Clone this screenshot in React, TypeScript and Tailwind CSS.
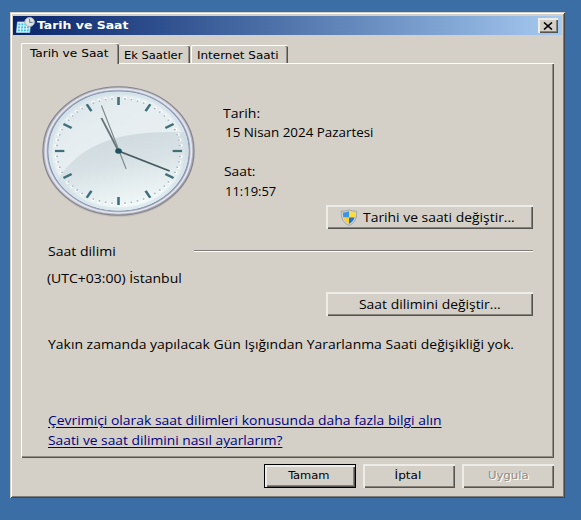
import type { ReactNode } from "react";
import clsx from "clsx";

const ui = "font-['Open_Sans','Noto_Sans',sans-serif] text-[12px] leading-[18px] text-black";
const tahoma = "font-['DejaVu_Sans_Condensed','DejaVu_Sans',sans-serif] text-[11px]";

const raised =
  "shadow-[inset_2px_2px_0_#eeece7,inset_-1px_-1px_0_#55534f,inset_-2px_-2px_0_#85827c]";

interface LabelProps {
  children: ReactNode;
  className?: string;
}

function Label({ children, className }: LabelProps) {
  return (
    <span className={clsx("block w-max whitespace-nowrap", className)}>{children}</span>
  );
}

function CalendarIcon() {
  return (
    <svg width="19" height="17" viewBox="0 0 19 17">
      <path d="M1.500 5h13l-.8 10.500H.5z" fill="#e9f7fc" stroke="#a9d3e6" strokeWidth="0.8" />
      {[6.4, 9.4, 12.4].map((y, row) =>
        [2.4, 5.4, 8.4, 11.4].map((x) => (
          <rect key={`${x}-${y}`} x={x - row * 0.3} y={y} width="2" height="2" fill="#35c0e4" />
        ))
      )}
      <ellipse cx="13.600" cy="5" rx="4.800" ry="4.500" fill="#dfe4e7" stroke="#a3adb5" strokeWidth="1" />
      <path d="M13.600 1.800v3.600h3" fill="none" stroke="#55707c" strokeWidth="0.9" />
    </svg>
  );
}

function ShieldIcon() {
  return (
    <svg width="18" height="17" viewBox="0 0 18 17">
      <defs>
        <clipPath id="shield">
          <path d="M9 2C7 3.200 5.200 3.600 3 3.600 2.800 9 4.200 12.400 9 14.900c4.800-2.500 6.200-5.900 6-11.300C12.800 3.600 11 3.200 9 2z" />
        </clipPath>
      </defs>
      <path
        d="M9 .6C6.800 2 4.300 2.200 1.300 2.100.9 9 2.700 13.600 9 16.500c6.300-2.900 8.100-7.500 7.700-14.400C13.700 2.200 11.200 2 9 .6z"
        fill="#cfd2d4"
        stroke="#979b9f"
        strokeWidth="0.8"
      />
      <g clipPath="url(#shield)">
        <rect width="9" height="8.500" fill="#3a95e4" />
        <rect x="9" width="9" height="8.500" fill="#ffdc33" />
        <rect y="8.500" width="9" height="8.500" fill="#ffd02a" />
        <rect x="9" y="8.500" width="9" height="8.500" fill="#2270c8" />
      </g>
    </svg>
  );
}

function Clock() {
  const marks = Array.from({ length: 60 }, (_, i) => i);
  return (
    <svg width="153" height="132" viewBox="0 0 130 132" preserveAspectRatio="none" className="block">
      <defs>
        <linearGradient id="rim" x1="0" y1="0" x2="1" y2="1">
          <stop offset="0" stopColor="#a9adb8" />
          <stop offset="0.5" stopColor="#c4c8d6" />
          <stop offset="1" stopColor="#999dac" />
        </linearGradient>
        <linearGradient id="face" x1="0" y1="0" x2="0.7" y2="1">
          <stop offset="0" stopColor="#d3e1e7" />
          <stop offset="0.35" stopColor="#e6edf0" />
          <stop offset="1" stopColor="#eaf0f1" />
        </linearGradient>
        <linearGradient id="shade" x1="0.3" y1="0" x2="0.7" y2="1">
          <stop offset="0" stopColor="#c8d3d9" />
          <stop offset="0.4" stopColor="#d5e0e4" />
          <stop offset="0.9" stopColor="#f4fbfb" />
        </linearGradient>
        <clipPath id="dial">
          <circle cx="65" cy="65" r="59.500" />
        </clipPath>
      </defs>
      <circle cx="65" cy="66.500" r="64.500" fill="#b5b0a9" opacity="0.6" />
      <circle cx="65" cy="65" r="64.200" fill="url(#rim)" stroke="#85838a" strokeWidth="1" />
      <circle cx="65" cy="65" r="61.900" fill="none" stroke="#e4e7ef" strokeWidth="1.500" />
      <circle cx="65" cy="65" r="60" fill="url(#face)" stroke="#8c95b0" strokeWidth="1" />
      <g clipPath="url(#dial)">
        <path d="M14 92C34 58 66 42 130 47V130H0z" fill="url(#shade)" opacity="0.85" />
        <circle cx="65" cy="65" r="58" fill="none" stroke="#c8dde7" strokeWidth="3" opacity="0.5" />
      </g>
      {marks.map((i) =>
        i % 5 === 0 ? (
          <rect
            key={i}
            x="63.900"
            y="11"
            width="2.200"
            height="8"
            fill="#3f7079"
            transform={`rotate(${i * 6} 65 65)`}
          />
        ) : (
          <g key={i} transform={`rotate(${i * 6} 65 65)`}>
            <circle cx="65" cy="11.800" r="1.500" fill="#fff" />
            <circle cx="65" cy="12.500" r="0.900" fill="#a4bbc2" />
          </g>
        )
      )}
      <path d="M65 65L50.500 32" stroke="#667478" strokeWidth="1.700" />
      <path d="M65 65L108.500 85" stroke="#465b60" strokeWidth="1.600" />
      <path d="M71.500 83L50.500 19.500" stroke="#7a8588" strokeWidth="0.900" />
      <circle cx="65" cy="65" r="2.800" fill="#1d535c" />
    </svg>
  );
}

function TitleBar() {
  return (
    <div className="flex h-[19px] items-center bg-linear-to-r from-[#0a246a] to-[#a6caf0] pr-[4px] pl-[3px]">
      <CalendarIcon />
      <div className={clsx(tahoma, "ml-[2px] flex-1 pt-px font-bold text-white")}>
        <Label className="origin-left scale-x-[1.26]">Tarih ve Saat</Label>
      </div>
      <button className={clsx("flex h-[15px] w-[20px] items-center justify-center bg-[#d4d0c8]", raised)}>
        <svg width="10" height="8" viewBox="0 0 10 8">
          <path d="M1 .5l8 7M9 .5l-8 7" stroke="#000" strokeWidth="1.600" />
        </svg>
      </button>
    </div>
  );
}

function Tabs() {
  const tab =
    "rounded-t-[2px] border-t border-l border-t-white border-l-white shadow-[inset_-1px_0_0_#55534f,inset_-2px_0_0_#908d87]";
  return (
    <div className={clsx(tahoma, "relative z-10 flex h-[20px] items-end text-black")}>
      <div className={clsx(tab, "h-[21px] w-[98px] self-start bg-[#d4d0c8] pt-[2px] pl-[8px]")}>
        <Label className="origin-left scale-x-[1.23]">Tarih ve Saat</Label>
      </div>
      <div className={clsx(tab, "h-[18px] w-[71px] border-l-0 pt-[2px] pl-[5px]")}>
        <Label className="origin-left scale-x-[1.16]">Ek Saatler</Label>
      </div>
      <div className={clsx(tab, "ml-px h-[18px] w-[97px] pt-[2px] pl-[5px]")}>
        <Label className="origin-left scale-x-[1.21]">Internet Saati</Label>
      </div>
    </div>
  );
}

function Panel() {
  return (
    <div
      className={clsx(
        ui,
        "flex h-[395px] flex-col border-t border-l border-white pr-[21px] pl-[26px] shadow-[inset_-1px_-1px_0_#55534f,inset_-2px_-2px_0_#908d87]"
      )}
    >
      <div className="flex h-[178px]">
        <div className="-ml-[6px] w-[182px] pt-[22px]">
          <Clock />
        </div>
        <div className="flex flex-1 flex-col pt-[41px]">
          <Label className="-ml-px origin-left scale-x-[1.17]">Tarih:</Label>
          <Label className="mt-px ml-px origin-left scale-x-[1.115]">15 Nisan 2024 Pazartesi</Label>
          <Label className="mt-[21px] origin-left scale-x-[1.15]">Saat:</Label>
          <Label className="mt-[2px] ml-px origin-left scale-x-[1.08]">11:19:57</Label>
          <button
            className={clsx("mt-[4px] flex h-[24px] w-[207px] shrink-0 items-center self-end pl-[14px]", raised)}
          >
            <ShieldIcon />
            <Label className="ml-[5px] origin-left scale-x-[1.158] pt-px">Tarihi ve saati değiştir...</Label>
          </button>
        </div>
      </div>
      <div className="flex h-[18px] items-center">
        <div className="w-[146px] pt-[2px]">
          <Label className="origin-left scale-x-[1.17]">Saat dilimi</Label>
        </div>
        <div className="h-[2px] flex-1 border-t border-b border-t-[#807d78] border-b-white" />
      </div>
      <Label className="mt-[10px] -ml-px origin-left scale-x-[1.165]">(UTC+03:00) İstanbul</Label>
      <button className={clsx("mt-[4px] flex h-[24px] w-[207px] items-center self-end pl-[33px]", raised)}>
        <Label className="origin-left scale-x-[1.158] pt-px">Saat dilimini değiştir...</Label>
      </button>
      <Label className="mt-[20px] origin-left scale-x-[1.163]">
        Yakın zamanda yapılacak Gün Işığından Yararlanma Saati değişikliği yok.
      </Label>
      <div className="mt-[58px] flex flex-col gap-[2px] text-[#000080] underline underline-offset-2">
        <Label className="origin-left scale-x-[1.16]">
          Çevrimiçi olarak saat dilimleri konusunda daha fazla bilgi alın
        </Label>
        <Label className="origin-left scale-x-[1.15]">Saati ve saat dilimini nasıl ayarlarım?</Label>
      </div>
    </div>
  );
}

function Footer() {
  const btn = "flex h-[24px] w-[92px] items-center justify-center";
  return (
    <div className={clsx(tahoma, "mt-[6px] flex justify-end gap-[7px]")}>
      <button className={clsx(btn, "border border-black pt-px pr-[3px]", raised)}>
        <Label className="scale-x-[1.16]">Tamam</Label>
      </button>
      <button className={clsx(btn, "pt-px pr-[2px]", raised)}>
        <Label className="scale-x-[1.22]">İptal</Label>
      </button>
      <button className={clsx(btn, "pt-px text-[#908d87] [text-shadow:1px_1px_0_#fff]", raised)} disabled>
        <Label className="scale-x-[1.18]">Uygula</Label>
      </button>
    </div>
  );
}

export default function App() {
  return (
    <div className="h-[520px] w-[581px] overflow-hidden bg-[#3a6ea5] pt-[12px] pl-[10px]">
      <div className="h-[486px] w-[555px] bg-[#d4d0c8] pt-[4px] pr-[3px] pl-[3px] shadow-[inset_1px_1px_0_#d4d0c8,inset_-1px_-1px_0_#45454a,inset_2px_2px_0_#fff,inset_-2px_-2px_0_#807d78]">
        <TitleBar />
        <div className="pt-[8px] pr-[8px] pl-[8px]">
          <Tabs />
          <Panel />
          <Footer />
        </div>
      </div>
    </div>
  );
}
